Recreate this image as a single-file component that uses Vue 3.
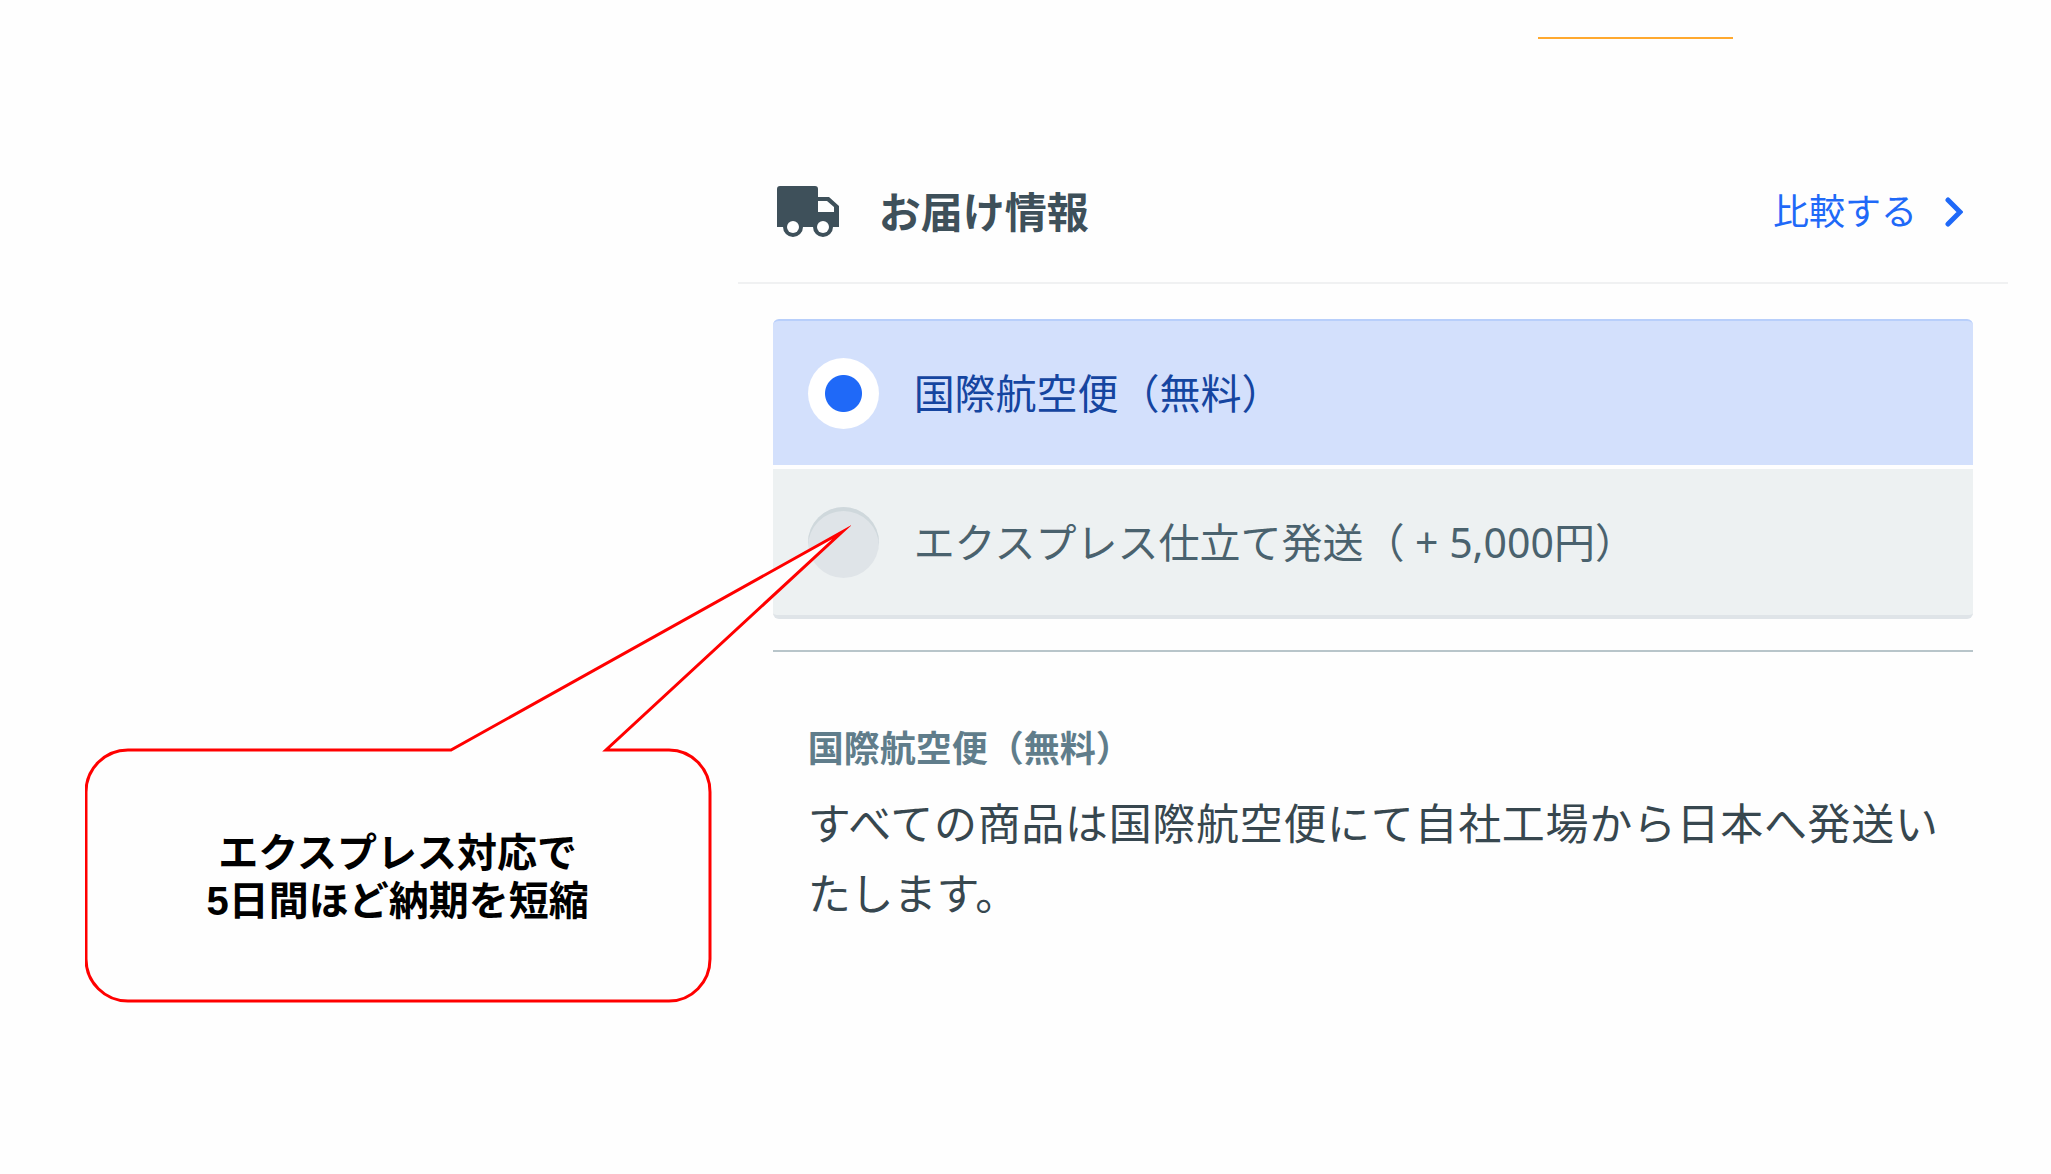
<script setup>
import { ref } from 'vue'

const selected = ref('air')
const options = [
  { id: 'air', label: '国際航空便（無料）' },
  { id: 'express', label: 'エクスプレス仕立て発送（ + 5,000円）' },
]
</script>

<template>
  <div class="page">
    <div class="tabs"><span class="tab-indicator"></span></div>
    <div class="columns">
      <aside class="notes">
        <div class="callout">
          <svg class="callout-shape" width="766" height="478" viewBox="0 0 766 478" aria-hidden="true">
            <path
              d="M43 225H366L757 7L521 225H584A41 42 0 0 1 625 267V434A41 42 0 0 1 584 476H43A42 42 0 0 1 1 434V267A42 42 0 0 1 43 225Z"
              fill="#fefefe" stroke="#ff0000" stroke-width="3" stroke-miterlimit="10" />
          </svg>
          <p class="callout-text">エクスプレス対応で<br />5日間ほど納期を短縮</p>
        </div>
      </aside>

      <main class="panel">
        <header class="panel-head">
          <svg class="truck" width="62" height="52" viewBox="0 0 62 52" aria-hidden="true">
            <path fill="#3e505a" fill-rule="evenodd"
              d="M3 0H38Q41 0 41 3V11H52L62 20V41H56A10 10 0 0 1 36 41H26A10 10 0 0 1 6 41H0V3Q0 0 3 0ZM41 15V26H57V21L50 15Z" />
            <circle cx="16" cy="41" r="6" fill="#fff" />
            <circle cx="46" cy="41" r="6" fill="#fff" />
          </svg>
          <h1>お届け情報</h1>
          <a class="compare" href="#compare">
            比較する
            <svg width="18" height="30" viewBox="0 0 18 30" aria-hidden="true">
              <path d="M3 3L15 15L3 27" fill="none" stroke="#1f69f8" stroke-width="5" stroke-linecap="round" />
            </svg>
          </a>
        </header>

        <section class="body">
          <div class="options" role="radiogroup" aria-label="お届け情報">
            <label v-for="o in options" :key="o.id" class="option" :class="{ active: selected === o.id }">
              <input v-model="selected" type="radio" name="shipping" :value="o.id" />
              <span>{{ o.label }}</span>
            </label>
          </div>
          <div class="detail">
            <h2>国際航空便（無料）</h2>
            <p>すべての商品は国際航空便にて自社工場から日本へ発送いたします。</p>
          </div>
        </section>
      </main>
    </div>
  </div>
</template>

<style>
body {
  margin: 0;
  background: #fefefe;
}
</style>

<style scoped>
.page {
  font-family: "Noto Sans", "Noto Sans CJK JP", sans-serif;
  color: #37474f;
}
h1, h2, p {
  margin: 0;
}
.tabs {
  display: flex;
  justify-content: flex-end;
  padding: 37px 318px 0 0;
}
.tab-indicator {
  width: 195px;
  height: 2px;
  background: #ffa92f;
}
.columns {
  display: grid;
  grid-template-columns: 36fr 62fr;
  padding-right: 43px;
}
.notes {
  display: flex;
  justify-content: flex-end;
  align-items: flex-start;
  padding: 712px 27px 0 0;
}
.callout {
  position: relative;
  z-index: 1;
  display: flex;
  align-items: center;
  justify-content: center;
  width: 626px;
  height: 252px;
}
.callout-shape {
  position: absolute;
  left: 0;
  bottom: 0;
  pointer-events: none;
}
.callout-text {
  position: relative;
  font-family: "Liberation Sans", "Noto Sans CJK JP", sans-serif;
  font-size: 40px;
  font-weight: 700;
  line-height: 48px;
  color: #000;
  text-align: center;
}
.panel-head {
  display: flex;
  align-items: center;
  height: 140px;
  padding: 103px 45px 0 39px;
  border-bottom: 2px solid #f0f1f2;
}
.truck {
  margin-right: 40px;
}
h1 {
  font-size: 42px;
  line-height: 60px;
  color: #3e505a;
}
.compare {
  display: flex;
  align-items: center;
  gap: 28px;
  margin-left: auto;
  font-size: 36px;
  line-height: 60px;
  color: #1f69f8;
  text-decoration: none;
}
.body {
  padding: 35px 35px 0;
}
.options {
  display: flex;
  flex-direction: column;
  gap: 4px;
  padding-bottom: 31px;
  border-bottom: 2px solid #b8c5ca;
}
.option {
  display: flex;
  align-items: center;
  gap: 35px;
  box-sizing: border-box;
  height: 150px;
  padding: 0 35px;
  border-bottom: 4px solid #dfe4e8;
  border-radius: 0 0 6px 6px;
  background: #edf1f2;
  font-size: 41px;
  line-height: 60px;
  color: #4a626e;
}
.option.active {
  height: 146px;
  border-top: 2px solid #b8cffb;
  border-bottom: 0;
  border-radius: 6px 6px 0 0;
  background: #d3e0fc;
  color: #1545a0;
}
.option input {
  appearance: none;
  flex: none;
  width: 71px;
  height: 71px;
  margin: 0;
  border-radius: 50%;
  background: #dfe4e8;
  box-shadow: inset 0 4px #cfd8dc;
}
.option input:checked {
  background: radial-gradient(circle, #1f69f8 18px, #fff 19px);
  box-shadow: none;
}
.detail {
  padding: 67px 35px 0;
}
h2 {
  font-size: 36px;
  line-height: 60px;
  color: #607d8b;
}
.detail p {
  margin-top: 10px;
  font-size: 43px;
  line-height: 70px;
  text-align: justify;
}
</style>
